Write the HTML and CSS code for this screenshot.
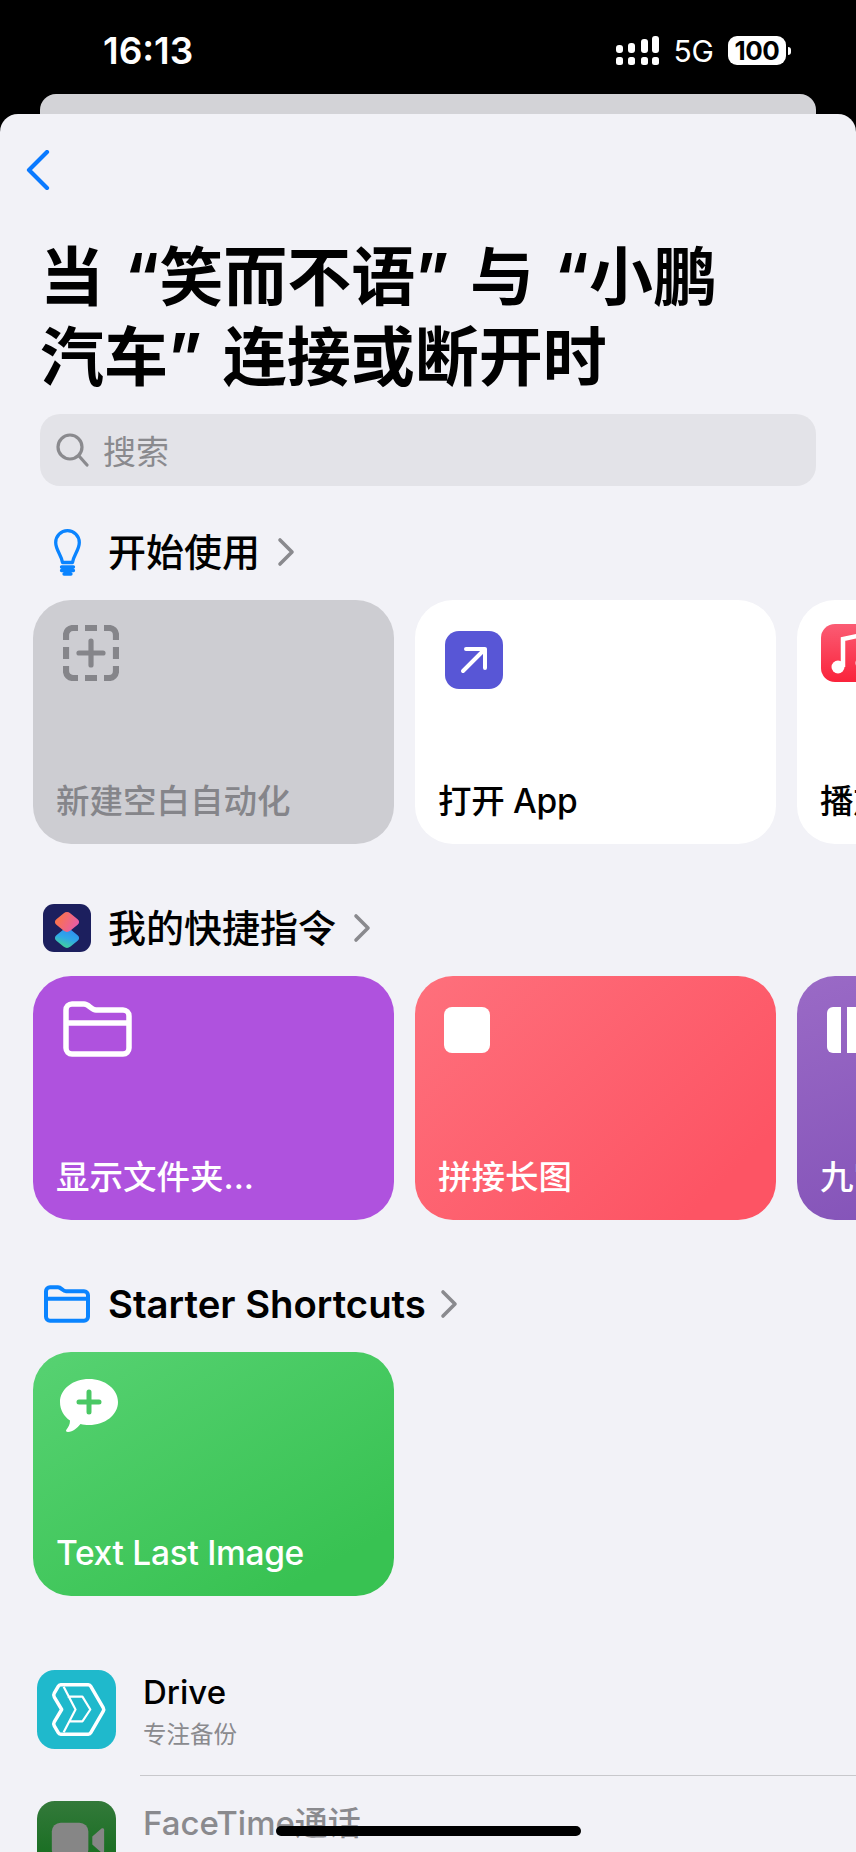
FILE: index.html
```html
<!DOCTYPE html>
<html lang="zh">
<head>
<meta charset="utf-8">
<title>当“笑而不语”与“小鹏汽车”连接或断开时</title>
<link rel="stylesheet" href="styles.css">
</head>
<body>
<div class="phone">
  <header class="status">
    <span class="time">16:13</span>
    <div class="status-right">
      <svg class="signal" width="44" height="30" viewBox="0 0 44 30" fill="#fff">
        <rect x="0" y="21" width="7" height="8" rx="2.5"/><rect x="12" y="21" width="7" height="8" rx="2.5"/><rect x="25" y="21" width="7" height="8" rx="2.5"/><rect x="36" y="21" width="7" height="8" rx="2.5"/>
        <rect x="0" y="9" width="7" height="8" rx="3"/><rect x="12" y="7" width="7" height="10" rx="3"/><rect x="25" y="3" width="7" height="14" rx="3"/><rect x="36" y="0" width="7" height="17" rx="3"/>
      </svg>
      <span class="net">5G</span>
      <div class="battery"><span class="batt-body">100</span><span class="batt-tip"></span></div>
    </div>
  </header>
  <div class="back-card"></div>
  <main class="sheet">
    <nav class="nav">
      <svg width="24" height="40" viewBox="0 0 24 40" fill="none" stroke="#0a7aff" stroke-width="4.200" stroke-linecap="round" stroke-linejoin="round"><path d="M21 2 3 20 21 38"/></svg>
    </nav>
    <h1 class="title">当 “笑而不语” 与 “小鹏<br>汽车” 连接或断开时</h1>
    <div class="search">
      <svg width="33" height="34" viewBox="0 0 33 34" fill="none" stroke="#8a8a8e" stroke-width="3.200" stroke-linecap="round"><circle cx="14" cy="14" r="12"/><path d="M23 23 31 32"/></svg>
      <span>搜索</span>
    </div>

    <section class="section">
      <div class="head">
        <span class="head-icon">
          <svg width="27" height="47" viewBox="0 0 27 47" fill="none" stroke="#0a84ff" stroke-width="3.300" stroke-linecap="round"><path d="M8.500 33.500C7.500 26 1.700 21 1.700 13.500a11.800 11.800 0 0 1 23.600 0c0 7.500-5.800 12.500-6.800 20Z" stroke-linejoin="round"/><path d="M7.500 38h12M7.500 41.500h12M10 45h7"/></svg>
        </span>
        <span class="head-text">开始使用</span>
        <svg class="chev" width="18" height="30" viewBox="0 0 18 30" fill="none" stroke="#8a8a8e" stroke-width="3.600" stroke-linecap="round" stroke-linejoin="round"><path d="M3 3 15 15 3 27"/></svg>
      </div>
      <div class="row">
        <article class="card card-new">
          <svg class="ic ic-dash" width="56" height="56" viewBox="0 0 56 56" fill="none" stroke="#85858a" stroke-width="6.200" stroke-linecap="butt"><path d="M3 15V10A7 7 0 0 1 10 3h5M41 3h5A7 7 0 0 1 53 10v5M53 41v5a7 7 0 0 1-7 7h-5M15 53h-5A7 7 0 0 1 3 46v-5M22 3h12M22 53h12M3 22v12M53 22v12"/><path stroke-width="5.200" stroke-linecap="round" d="M28 16v24M16 28h24"/></svg>
          <span class="label">新建空白自动化</span>
        </article>
        <article class="card card-white">
          <svg class="ic ic-arrow" width="58" height="58" viewBox="0 0 58 58"><rect width="58" height="58" rx="14" fill="#5856d6"/><path d="M18 40 40 18M21 18h19v19" fill="none" stroke="#fff" stroke-width="4" stroke-linecap="round" stroke-linejoin="round"/></svg>
          <span class="label label-tight">打开 App</span>
        </article>
        <article class="card card-white">
          <svg class="ic ic-music" width="58" height="58" viewBox="0 0 58 58"><defs><linearGradient id="mg" x1="0" y1="0" x2="0" y2="1"><stop offset="0" stop-color="#fb5c74"/><stop offset="1" stop-color="#fa233b"/></linearGradient></defs><rect width="58" height="58" rx="14" fill="url(#mg)"/><path d="M22 43V15l24-5v28" fill="none" stroke="#fff" stroke-width="4.500"/><circle cx="17" cy="43" r="6.500" fill="#fff"/><circle cx="41" cy="39" r="6.500" fill="#fff"/></svg>
          <span class="label">播放音乐</span>
        </article>
      </div>
    </section>

    <section class="section">
      <div class="head">
        <span class="head-icon">
          <svg width="48" height="48" viewBox="0 0 48 48"><defs><linearGradient id="s1" x1="0" y1="0.6" x2="1" y2="0.2"><stop offset="0" stop-color="#f9724f"/><stop offset="1" stop-color="#e85ca8"/></linearGradient><linearGradient id="s2" x1="0.2" y1="0" x2="0.6" y2="1"><stop offset="0" stop-color="#2f8ff0"/><stop offset="0.55" stop-color="#2fa8e8"/><stop offset="1" stop-color="#3fcba6"/></linearGradient></defs><rect width="48" height="48" rx="11" fill="#1c1f5e"/><rect x="14" y="24" width="20" height="20" rx="5" fill="url(#s2)" transform="translate(24 34) scale(1 .8) rotate(45) translate(-24 -34)"/><rect x="14" y="8" width="20" height="20" rx="5" fill="url(#s1)" transform="translate(24 18) scale(1 .8) rotate(45) translate(-24 -18)"/></svg>
        </span>
        <span class="head-text">我的快捷指令</span>
        <svg class="chev" width="18" height="30" viewBox="0 0 18 30" fill="none" stroke="#8a8a8e" stroke-width="3.600" stroke-linecap="round" stroke-linejoin="round"><path d="M3 3 15 15 3 27"/></svg>
      </div>
      <div class="row">
        <article class="card card-purple">
          <svg class="ic ic-folder" width="69" height="56" viewBox="0 0 69 56" fill="none" stroke="#fff" stroke-width="5.500" stroke-linejoin="round"><path d="M3 9a6 6 0 0 1 6-6h12c5 0 7 6 12 6h27a6 6 0 0 1 6 6v32a6 6 0 0 1-6 6H9a6 6 0 0 1-6-6Z"/><path d="M3 22h63"/></svg>
          <span class="label label-light">显示文件夹...</span>
        </article>
        <article class="card card-red">
          <span class="ic ic-square"></span>
          <span class="label label-light">拼接长图</span>
        </article>
        <article class="card card-violet">
          <span class="ic ic-bars"><i class="bar"></i><i class="bar"></i></span>
          <span class="label label-light">九宫格切图</span>
        </article>
      </div>
    </section>

    <section class="section">
      <div class="head">
        <span class="head-icon">
          <svg width="46" height="38" viewBox="0 0 69 56" fill="none" stroke="#0a84ff" stroke-width="6" stroke-linejoin="round"><path d="M3 9a6 6 0 0 1 6-6h12c5 0 7 6 12 6h27a6 6 0 0 1 6 6v32a6 6 0 0 1-6 6H9a6 6 0 0 1-6-6Z"/><path d="M3 20h63"/></svg>
        </span>
        <span class="head-text head-latin">Starter Shortcuts</span>
        <svg class="chev chev-tight" width="18" height="30" viewBox="0 0 18 30" fill="none" stroke="#8a8a8e" stroke-width="3.600" stroke-linecap="round" stroke-linejoin="round"><path d="M3 3 15 15 3 27"/></svg>
      </div>
      <div class="row">
        <article class="card card-green">
          <svg class="ic ic-bubble" width="58" height="54" viewBox="0 0 58 54"><path d="M29 0C45 0 58 10 58 23S45 46 29 46c-3 0-6-.4-8.500-1C17 49 13 53 8 53c-2 0-2.500-1-1.500-2.500 2-2.500 3.500-5 3.500-9C4 37.500 0 31 0 23 0 10 13 0 29 0Z" fill="#fff"/><path d="M29 13v20M19 23h20" stroke="#4ac864" stroke-width="5" stroke-linecap="round"/></svg>
          <span class="label label-light label-tight">Text Last Image</span>
        </article>
      </div>
    </section>

    <section class="apps">
      <div class="app">
        <svg class="app-icon" width="79" height="79" viewBox="0 0 80 80"><rect width="80" height="80" rx="18" fill="#1fb9cc"/><path d="M24 15h28a3 3 0 0 1 2.500 1.500L67 38a4 4 0 0 1 0 4L54.500 63.500A3 3 0 0 1 52 65H24a3 3 0 0 1-2.500-1.500l-4-7a4 4 0 0 1 0-4L25 40l-7.500-12.500a4 4 0 0 1 0-4l4-7A3 3 0 0 1 24 15Z" fill="none" stroke="#fff" stroke-width="3.500" stroke-linejoin="round"/><path d="M27 17 39 40 27 63M31 27h15l8 13-8 12H33" fill="none" stroke="#fff" stroke-width="2.200" stroke-linejoin="round"/></svg>
        <div class="app-text">
          <span class="app-name">Drive</span>
          <span class="app-sub">专注备份</span>
        </div>
      </div>
      <div class="app app-divided">
        <svg class="app-icon" width="79" height="79" viewBox="0 0 80 80"><defs><linearGradient id="ft" x1="0" y1="0" x2="0" y2="1"><stop offset="0" stop-color="#33793a"/><stop offset="1" stop-color="#0e6a18"/></linearGradient></defs><rect width="80" height="80" rx="18" fill="url(#ft)"/><rect x="15" y="22" width="37" height="36" rx="9" fill="#868686"/><path d="M56 36 65 28c1.500-1 3-.5 3 1.500v21c0 2-1.500 2.500-3 1.500l-9-8Z" fill="#868686"/></svg>
        <div class="app-text">
          <span class="app-name app-name-dim">FaceTime通话</span>
        </div>
      </div>
    </section>
  </main>
  <div class="home-bar"></div>
</div>
</body>
</html>
```

FILE: styles.css
```css
* { box-sizing: border-box; }
html, body { margin: 0; padding: 0; background: #000; }
body { font-family: Inter, "Noto Sans CJK SC", sans-serif; }
.phone { position: relative; width: 856px; height: 1852px; overflow: hidden; background: #000; display: flex; flex-direction: column; }

.status { height: 94px; flex: none; display: flex; justify-content: space-between; padding: 30px 65px 0 103px; color: #fff; }
.time { font-size: 37px; font-weight: 600; line-height: 42px; letter-spacing: 0; }
.status-right { display: flex; align-items: flex-start; padding-top: 6px; }
.net { font-size: 30px; line-height: 30px; margin-left: 13px; font-weight: 400; }
.battery { display: flex; align-items: center; margin-left: 14px; }
.batt-body { width: 58px; height: 29px; background: #fff; color: #000; border-radius: 9px; font-size: 26px; font-weight: 700; line-height: 29px; text-align: center; letter-spacing: -0.5px; }
.batt-tip { width: 3px; height: 8px; margin-left: 2px; background: #fff; border-radius: 0 3px 3px 0; }

.back-card { flex: none; height: 20px; margin: 0 40px; background: #d3d3d7; border-radius: 16px 16px 0 0; }
.sheet { flex: 1; background: #f2f2f7; border-radius: 18px 18px 0 0; overflow: hidden; }

.nav { height: 123px; padding: 36px 0 0 26px; }
.nav svg { display: block; }
.title { margin: 0 0 17px; padding-left: 40px; font-size: 64px; line-height: 80px; font-weight: 700; color: #000; white-space: nowrap; word-spacing: 5.500px; }

.search { height: 72px; margin: 0 40px 42px; padding-left: 16px; background: #e3e3e8; border-radius: 20px; display: flex; align-items: center; gap: 14px; color: #8a8a8e; font-size: 33px; }

.section { margin-bottom: 60px; }
.section:nth-of-type(3) { margin-bottom: 74px; }
.head { height: 48px; display: flex; align-items: center; padding-left: 43px; margin-bottom: 24px; }
.head-icon { width: 48px; height: 48px; display: flex; align-items: center; justify-content: center; margin-right: 17px; flex: none; }
.head-icon svg { display: block; }
.head-text { font-size: 38px; font-weight: 500; color: #000; line-height: 48px; white-space: nowrap; }
.head-latin { font-size: 38.300px; font-weight: 600; }
.chev { margin-left: 17px; flex: none; }
.chev-tight { margin-left: 14px; }

.row { display: flex; gap: 21px; padding-left: 33px; overflow: hidden; }
.card { flex: none; width: 361px; height: 244px; border-radius: 38px; padding: 0 0 21px 23px; display: flex; flex-direction: column; justify-content: space-between; overflow: hidden; }
.card-new { background: #cdcdd2; color: #85858a; }
.card-white { background: #fff; color: #000; }
.card-purple { background: #af52de; }
.card-red { background: linear-gradient(135deg, #fe707c, #fd5464 85%); }
.card-violet { background: linear-gradient(160deg, #9a6ac6, #7d4cb4); }
.card-green { background: linear-gradient(150deg, #57d272, #38c252 85%); }

.label { font-size: 33.500px; font-weight: 500; line-height: 44px; white-space: nowrap; }
.label-tight { letter-spacing: -0.3px; }
.label-light { color: #fff; }

.ic { display: block; flex: none; }
.ic-dash { margin: 25px 0 0 7px; }
.ic-arrow { margin: 31px 0 0 7px; }
.ic-music { margin: 24px 0 0 1px; }
.ic-folder { margin: 25px 0 0 7px; }
.ic-square { width: 46px; height: 46px; margin: 31px 0 0 6px; background: #fff; border-radius: 8px; }
.ic-bars { display: flex; gap: 6px; margin: 31px 0 0 7px; }
.bar { display: block; width: 14px; height: 46px; background: #fff; border-radius: 6px 0 0 6px; }
.bar + .bar { width: 30px; border-radius: 0; }
.ic-bubble { margin: 27px 0 0 4px; }

.apps { display: block; }
.app { display: flex; padding: 0 0 26px 37px; gap: 27px; }
.app-divided { position: relative; padding-top: 26px; }
.app-divided::before { content: ""; position: absolute; top: 0; left: 140px; right: 0; height: 1px; background: #c8c8cc; }
.app-icon { display: block; flex: none; }
.app-text { display: flex; flex-direction: column; }
.app-name { font-size: 33px; font-weight: 500; line-height: 40px; color: #000; margin-top: 2px; }
.app-name-dim { color: #8a8a8e; }
.app-sub { font-size: 23.500px; line-height: 28px; color: #8a8a8e; margin-top: 9px; }

.home-bar { position: absolute; left: 276px; top: 1826px; width: 305px; height: 10px; border-radius: 5px; background: #000; }
```
